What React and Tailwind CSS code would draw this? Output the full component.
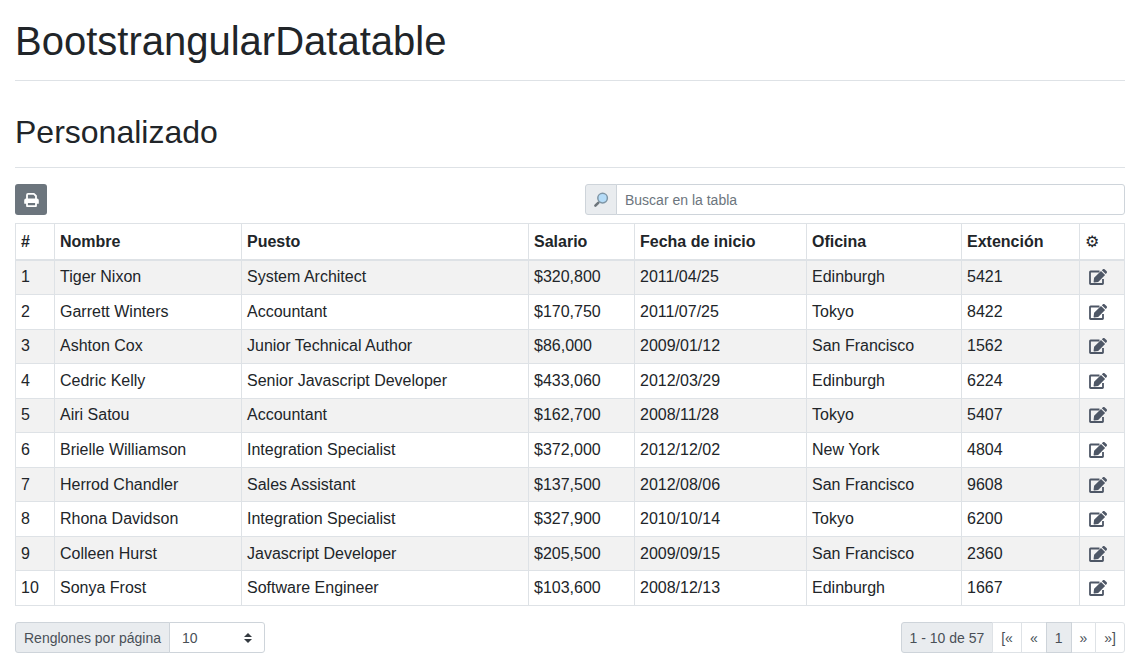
import { useState } from "react";

const columns = [
  { label: "Nombre", width: "w-[187px]" },
  { label: "Puesto", width: "w-[287px]" },
  { label: "Salario", width: "w-[106px]" },
  { label: "Fecha de inicio", width: "w-[172px]" },
  { label: "Oficina", width: "w-[155px]" },
  { label: "Extención", width: "w-[118px]" },
];

const rows = [
  ["Tiger Nixon", "System Architect", "$320,800", "2011/04/25", "Edinburgh", "5421"],
  ["Garrett Winters", "Accountant", "$170,750", "2011/07/25", "Tokyo", "8422"],
  ["Ashton Cox", "Junior Technical Author", "$86,000", "2009/01/12", "San Francisco", "1562"],
  ["Cedric Kelly", "Senior Javascript Developer", "$433,060", "2012/03/29", "Edinburgh", "6224"],
  ["Airi Satou", "Accountant", "$162,700", "2008/11/28", "Tokyo", "5407"],
  ["Brielle Williamson", "Integration Specialist", "$372,000", "2012/12/02", "New York", "4804"],
  ["Herrod Chandler", "Sales Assistant", "$137,500", "2012/08/06", "San Francisco", "9608"],
  ["Rhona Davidson", "Integration Specialist", "$327,900", "2010/10/14", "Tokyo", "6200"],
  ["Colleen Hurst", "Javascript Developer", "$205,500", "2009/09/15", "San Francisco", "2360"],
  ["Sonya Frost", "Software Engineer", "$103,600", "2008/12/13", "Edinburgh", "1667"],
];

const headCell = "h-9 border border-b-2 border-[#dee2e6] px-[5px] pt-[5px] pb-1 text-left align-middle";
const bodyCell = "border border-[#dee2e6] px-[5px] py-1 align-middle";

function PrintIcon() {
  return (
    <svg viewBox="0 0 15 14" fill="none" className="h-[14px] w-[15px]" aria-hidden="true">
      <path d="M3 6V1.9a1 1 0 0 1 1-1h5.9L12 3v3" stroke="currentColor" strokeWidth="1.8" strokeLinejoin="round" />
      <path fill="currentColor" d="M2 5.6h11a1.8 1.8 0 0 1 1.8 1.8v2.8a.6.6 0 0 1-.6.6H.8a.6.6 0 0 1-.6-.6V7.4a1.8 1.8 0 0 1 1.8-1.8z" />
      <path d="M3 9h9v4.1H3z" fill="#6c757d" stroke="currentColor" strokeWidth="1.8" strokeLinejoin="round" />
    </svg>
  );
}

function EditIcon() {
  return (
    <svg viewBox="0 0 18 16" fill="none" className="h-4 w-[18px]" aria-hidden="true">
      <path
        d="M10.5 2.5H1.6a.6.6 0 0 0-.6.6v11.300a.6.6 0 0 0 .6.6h11.800a.6.6 0 0 0 .6-.6V10"
        stroke="currentColor"
        strokeWidth="1.8"
      />
      <path fill="currentColor" d="M12 1.900 5.100 8.800 4.600 12.700a.6.6 0 0 0 .7.7l3.900-.5 6.900-6.900z" />
      <path fill="currentColor" d="M12.800 1.200 13.700.400a1.500 1.500 0 0 1 2.100 0l1.700 1.700a1.500 1.500 0 0 1 0 2.100l-.8.9z" />
    </svg>
  );
}

function SearchIcon() {
  return (
    <svg viewBox="0 0 16 16" className="size-4" aria-hidden="true">
      <path d="M6.6 9.6 5.4 10.8" stroke="#8f979d" strokeWidth="1.4" />
      <path d="M5.2 10.9 2.4 13.7" stroke="#6d757b" strokeWidth="2.6" strokeLinecap="round" />
      <circle cx="9.6" cy="6.1" r="4.8" fill="#b5dcf8" stroke="#7f96a6" strokeWidth="1.5" />
    </svg>
  );
}

function SortCaret() {
  return (
    <svg viewBox="0 0 8 10" className="pointer-events-none absolute right-[13px] h-[10px] w-2" aria-hidden="true">
      <path fill="#343a40" d="M4 0 0 4h8zM4 10 0 6h8z" />
    </svg>
  );
}

function PageButton({ label, children, active = false, last = false }) {
  return (
    <li className="-ml-px">
      <button
        type="button"
        aria-label={label}
        aria-current={active ? "page" : undefined}
        className={
          "relative border px-2 pt-[5px] pb-[3px] text-[#495057] " +
          (active ? "z-10 border-[#ced4da] bg-[#e9ecef] " : "border-[#dee2e6] bg-white ") +
          (last ? "rounded-r-[3px]" : "")
        }
      >
        {children}
      </button>
    </li>
  );
}

export default function App() {
  const [query, setQuery] = useState("");
  const [pageSize, setPageSize] = useState("10");

  return (
    <main className="bg-white px-[15px] py-4 font-['Liberation_Sans',Arial,sans-serif] text-base leading-6 text-[#212529]">
      <h1 className="border-b border-[#dee2e6] pb-[14px] text-[40px] leading-[50px] font-medium">BootstrangularDatatable</h1>
      <h2 className="mt-8 border-b border-[#dee2e6] pb-4 text-[32px] leading-[38px] font-medium">Personalizado</h2>

      <div className="mt-4 grid grid-cols-2 gap-[30px] text-sm leading-[21px]">
        <div>
          <button
            type="button"
            aria-label="Imprimir"
            className="flex h-[31px] w-8 items-center justify-center rounded-[3px] bg-[#6c757d] text-white"
          >
            <PrintIcon />
          </button>
        </div>
        <div className="flex">
          <label
            htmlFor="search"
            aria-label="Buscar"
            className="flex w-8 items-center justify-center rounded-l-[3px] border border-[#ced4da] bg-[#e9ecef]"
          >
            <SearchIcon />
          </label>
          <input
            id="search"
            type="search"
            value={query}
            onChange={(e) => setQuery(e.target.value)}
            placeholder="Buscar en la tabla"
            className="-ml-px min-w-0 flex-1 rounded-r-[3px] border border-[#ced4da] bg-white px-2 pt-[5px] pb-[3px] text-[#495057] placeholder:text-[#6c757d]"
          />
        </div>
      </div>

      <table className="mt-2 h-[383px] w-full table-fixed border-collapse">
        <thead>
          <tr>
            <th scope="col" className={headCell + " w-[39px]"}>#</th>
            {columns.map((column) => (
              <th key={column.label} scope="col" className={headCell + " " + column.width}>
                {column.label}
              </th>
            ))}
            <th scope="col" className={headCell + " w-[45px] font-normal"}>⚙</th>
          </tr>
        </thead>
        <tbody>
          {rows.map((row, index) => (
            <tr key={row[0]} className="odd:bg-[#f2f2f2]">
              <td className={bodyCell}>{index + 1}</td>
              {row.map((value, cell) => (
                <td key={cell} className={bodyCell}>{value}</td>
              ))}
              <td className={bodyCell}>
                <button type="button" aria-label={"Editar " + row[0]} className="block px-1 text-[#4e5766]">
                  <EditIcon />
                </button>
              </td>
            </tr>
          ))}
        </tbody>
      </table>

      <div className="mt-4 flex items-start justify-between text-sm leading-[21px]">
        <div className="flex">
          <label
            htmlFor="page-size"
            className="rounded-l-[3px] border border-[#ced4da] bg-[#e9ecef] px-2 pt-[5px] pb-[3px] text-[#495057]"
          >
            Renglones por página
          </label>
          <div className="relative -ml-px flex w-24 items-center">
            <select
              id="page-size"
              value={pageSize}
              onChange={(e) => setPageSize(e.target.value)}
              className="h-full w-full appearance-none rounded-r-[3px] border border-[#ced4da] bg-white pt-[5px] pr-7 pb-[3px] pl-3 text-[#495057]"
            >
              <option>10</option>
              <option>25</option>
              <option>50</option>
              <option>100</option>
            </select>
            <SortCaret />
          </div>
        </div>

        <nav aria-label="Paginación" className="flex">
          <span className="rounded-l-[3px] border border-[#ced4da] bg-[#e9ecef] px-2 pt-[5px] pb-[3px] text-[#495057]">
            1 - 10 de 57
          </span>
          <ul className="flex">
            <PageButton label="Primera página">[«</PageButton>
            <PageButton label="Página anterior">«</PageButton>
            <PageButton label="Página 1" active>1</PageButton>
            <PageButton label="Página siguiente">»</PageButton>
            <PageButton label="Última página" last>»]</PageButton>
          </ul>
        </nav>
      </div>
    </main>
  );
}
